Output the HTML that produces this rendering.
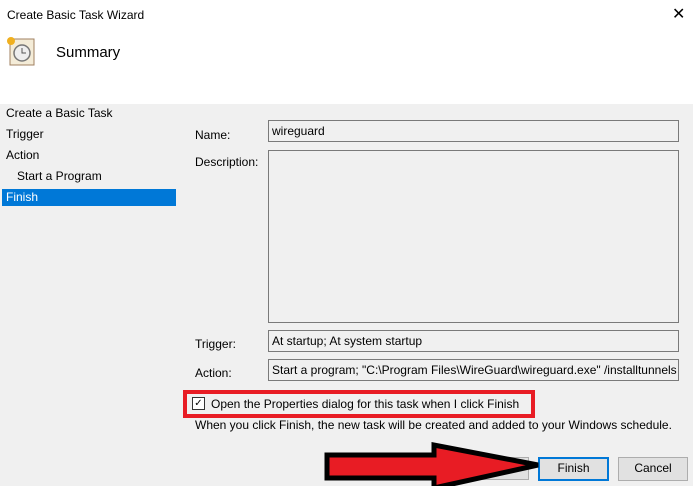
<!DOCTYPE html>
<html><head><style>
body{margin:0;width:693px;height:486px;overflow:hidden;background:#f0f0f0;font-family:"Liberation Sans",sans-serif;font-size:12px;color:#000;position:relative}
.a{position:absolute;white-space:nowrap}
.box{position:absolute;border:1px solid #7a7a7a;background:#f0f0f0;box-sizing:border-box;padding:3px 3px;white-space:nowrap;overflow:hidden}
.btn{position:absolute;border:1px solid #adadad;background:#e1e1e1;box-sizing:border-box;text-align:center;line-height:21px}
</style></head><body>
<div class="a" style="left:0;top:0;width:693px;height:104px;background:#fff"></div>
<div class="a" style="left:7px;top:8px">Create Basic Task Wizard</div>
<div class="a" style="left:672px;top:4px;font-size:16px">✕</div>
<svg class="a" style="left:5px;top:36px" width="32" height="32"><rect x="5" y="3" width="24" height="26" fill="#f4ecd8" stroke="#a08060"/><circle cx="17" cy="17" r="8" fill="#eee" stroke="#777" stroke-width="1.5"/><path d="M17 12v5h4" stroke="#555" fill="none"/><circle cx="6" cy="5" r="4" fill="#f0b020"/></svg>
<div class="a" style="left:56px;top:44px;font-size:15px">Summary</div>
<div class="a" style="left:6px;top:106px">Create a Basic Task</div>
<div class="a" style="left:6px;top:127px">Trigger</div>
<div class="a" style="left:6px;top:148px">Action</div>
<div class="a" style="left:17px;top:169px">Start a Program</div>
<div class="a" style="left:2px;top:189px;width:174px;height:17px;background:#0078d7;color:#fff;padding-left:4px;box-sizing:border-box;line-height:16px">Finish</div>
<div class="a" style="left:195px;top:128px">Name:</div>
<div class="a" style="left:195px;top:155px">Description:</div>
<div class="a" style="left:195px;top:337px">Trigger:</div>
<div class="a" style="left:195px;top:366px">Action:</div>
<div class="box" style="left:268px;top:120px;width:411px;height:22px">wireguard</div>
<div class="box" style="left:268px;top:150px;width:411px;height:173px"></div>
<div class="box" style="left:268px;top:330px;width:411px;height:22px">At startup; At system startup</div>
<div class="box" style="left:268px;top:359px;width:411px;height:22px">Start a program; "C:\Program Files\WireGuard\wireguard.exe" /installtunnels</div>
<div class="a" style="left:192px;top:397px;width:11px;height:11px;border:1px solid #333;background:#fff;font-size:10px;line-height:11px;text-align:center">✓</div>
<div class="a" style="left:211px;top:397px">Open the Properties dialog for this task when I click Finish</div>
<div class="a" style="left:183px;top:390px;width:352px;height:28px;border:4px solid #e81c24;box-sizing:border-box"></div>
<div class="a" style="left:195px;top:418px">When you click Finish, the new task will be created and added to your Windows schedule.</div>
<div class="btn" style="left:440px;top:457px;width:89px;height:23px"></div>
<div class="btn" style="left:538px;top:457px;width:71px;height:24px;border:2px solid #0078d7;line-height:19px">Finish</div>
<div class="btn" style="left:618px;top:457px;width:70px;height:24px">Cancel</div>
<svg class="a" style="left:320px;top:440px" width="225" height="46"><path d="M7 15H114V5L218 25L114 48V38H7Z" fill="#e81c24" stroke="#000" stroke-width="5" stroke-linejoin="miter"/></svg>
</body></html>
